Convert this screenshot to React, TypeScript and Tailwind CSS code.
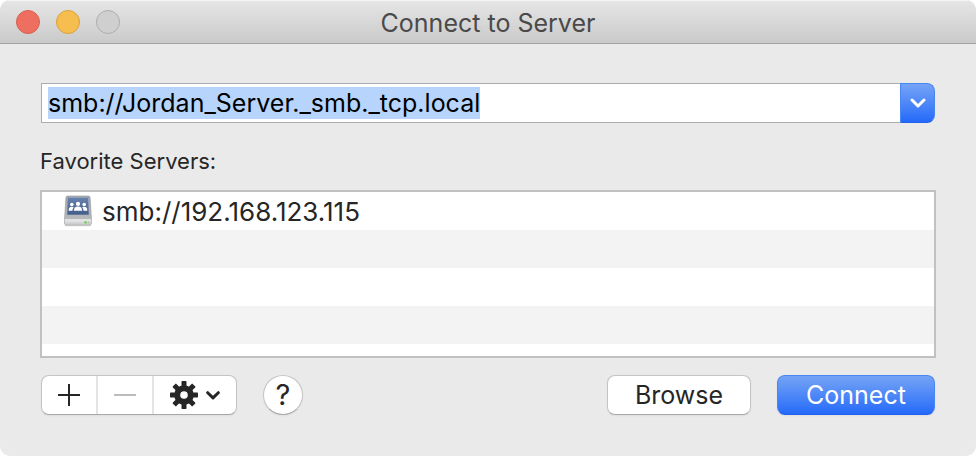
import * as React from "react";

const FAVORITES = ["smb://192.168.123.115"];
const VISIBLE_ROWS = 5;

/** Shared volume: a silver drive with a blue "people" panel. */
function ServerIcon() {
  return (
    <svg width="30" height="32" viewBox="0 0 30 32" className="shrink-0" aria-hidden>
      <defs>
        <linearGradient id="drive-top" x1="0" y1="0" x2="0" y2="1">
          <stop offset="0" stopColor="#a3a5a6" />
          <stop offset="1" stopColor="#bcbebf" />
        </linearGradient>
        <linearGradient id="drive-front" x1="0" y1="0" x2="0" y2="1">
          <stop offset="0" stopColor="#e9eaea" />
          <stop offset="1" stopColor="#c4c6c7" />
        </linearGradient>
        <linearGradient id="drive-panel" x1="0" y1="0" x2="0" y2="1">
          <stop offset="0" stopColor="#6782b0" />
          <stop offset="1" stopColor="#435d88" />
        </linearGradient>
      </defs>
      <path d="M1.500 29.500h27l-1 1.700h-25z" fill="#000" opacity="0.14" />
      <path
        d="M4.600 1h20.800c1 0 1.600.6 1.700 1.600l1.400 21.900v3.600c0 1.200-.8 2-2 2h-23c-1.200 0-2-.8-2-2v-3.600l1.400-21.900c.1-1 .7-1.600 1.700-1.600z"
        fill="url(#drive-top)"
        stroke="#96999b"
        strokeWidth="0.6"
      />
      <path
        d="M1.800 24.800h26.400v3.300c0 1.100-.8 1.700-1.800 1.700h-22.800c-1 0-1.800-.6-1.800-1.700z"
        fill="url(#drive-front)"
      />
      <path d="M1.900 24.700h26.200" stroke="#f5f6f6" strokeWidth="0.7" />
      <path d="M4.400 2.300h21.200l.5 17.700H3.900z" fill="url(#drive-panel)" stroke="#b4bac2" strokeWidth="0.6" />
      <g fill="#fff">
        <circle cx="8.800" cy="9.500" r="1.800" />
        <circle cx="21.200" cy="9.500" r="1.800" />
        <path d="M5.700 15.800c-.2-2.700.9-4.100 3.100-4.100 1 0 1.700.3 2.100.9-1 .7-1.400 1.800-1.400 3.200z" />
        <path d="M24.300 15.800c.2-2.700-.9-4.100-3.100-4.100-1 0-1.700.3-2.100.9 1 .7 1.400 1.800 1.400 3.200z" />
        <circle cx="15" cy="8.900" r="2.100" />
        <path d="M10.900 15.800c-.1-3 1.300-4.400 4.100-4.400s4.200 1.400 4.100 4.400z" />
      </g>
      <ellipse cx="22.600" cy="27.400" rx="1.600" ry="1.100" fill="#76cf55" />
      <path d="M25.700 26.500v1.800" stroke="#9ea1a2" strokeWidth="0.7" />
    </svg>
  );
}

function GearIcon() {
  return (
    <svg width="28" height="28" viewBox="0 0 28 28" aria-hidden>
      <g fill="#262626">
        {[0, 45, 90, 135].map((deg) => (
          <rect key={deg} x="11.500" y="0" width="5" height="28" rx="0.800" transform={`rotate(${deg} 14 14)`} />
        ))}
        <circle cx="14" cy="14" r="9.800" />
      </g>
      <circle cx="14" cy="14" r="3.800" fill="#fff" />
    </svg>
  );
}

function Chevron() {
  return (
    <svg
      width="16"
      height="10"
      viewBox="0 0 16 10"
      fill="none"
      stroke="currentColor"
      strokeWidth="3"
      strokeLinecap="round"
      strokeLinejoin="round"
      aria-hidden
    >
      <path d="M2 2l6 6 6-6" />
    </svg>
  );
}

function SmallChevron() {
  return (
    <svg
      width="14"
      height="10"
      viewBox="0 0 14 10"
      fill="none"
      stroke="currentColor"
      strokeWidth="3"
      strokeLinecap="round"
      strokeLinejoin="round"
      aria-hidden
    >
      <path d="M1.700 2.700l5.300 5.200 5.300-5.200" />
    </svg>
  );
}

function TitleBar() {
  return (
    <header className="relative flex h-11 items-center justify-center border-b border-[#a2a2a2] bg-linear-to-b from-[#e6e6e6] to-[#cacaca] shadow-[inset_0_1px_0_#f5f5f5]">
      <div className="absolute left-4 flex gap-4">
        <button type="button" aria-label="Close" className="size-6 rounded-full border border-[#d9604f] bg-[#ee6f5f]" />
        <button type="button" aria-label="Minimize" className="size-6 rounded-full border border-[#d9a13c] bg-[#f6be4f]" />
        <button type="button" aria-label="Zoom" disabled className="size-6 rounded-full border border-[#adadad] bg-[#cfcfcf]" />
      </div>
      <h1 className="pt-0.5 text-[25px] leading-8 text-[#4a4a4a]">Connect to Server</h1>
    </header>
  );
}

export default function App() {
  const [address, setAddress] = React.useState("smb://Jordan_Server._smb._tcp.local");
  const inputRef = React.useRef<HTMLInputElement>(null);

  React.useEffect(() => {
    inputRef.current?.focus();
    inputRef.current?.select();
  }, []);

  return (
    <div className="min-h-screen bg-white font-['Inter','Liberation_Sans',sans-serif] text-[#262626]">
      <div className="flex min-h-screen flex-col overflow-hidden rounded-[10px] bg-[#eaeaea]">
        <TitleBar />
        <main className="px-10 pt-[39px] pb-10">
          <div className="mx-px flex h-10">
            <input
              ref={inputRef}
              type="text"
              aria-label="Server address"
              value={address}
              onChange={(e) => setAddress(e.target.value)}
              className="min-w-0 flex-1 border border-r-0 border-[#acacac] bg-white px-1.5 text-[25px] leading-8 text-black caret-transparent outline-none selection:bg-[#b7d5fcfe] selection:text-black"
            />
            <button
              type="button"
              aria-label="Recent servers"
              className="flex w-[35px] items-center justify-center rounded-r-lg border border-[#4a86f2] border-b-[#2262ee] bg-linear-to-b from-[#75a3f5] to-[#2469f9] text-white"
            >
              <Chevron />
            </button>
          </div>

          <h2 id="favorites" className="mt-6 text-[22px] leading-7">
            Favorite Servers:
          </h2>
          <ul
            aria-labelledby="favorites"
            className="mt-[15px] h-[168px] overflow-hidden border-2 border-[#c1c1c1] bg-white text-[26px]"
          >
            {Array.from({ length: VISIBLE_ROWS }, (_, i) => (
              <li key={i} className="flex h-[38px] items-center gap-[9px] pl-[21px] even:bg-[#f3f3f3]">
                {FAVORITES[i] ? (
                  <>
                    <ServerIcon />
                    <span>{FAVORITES[i]}</span>
                  </>
                ) : null}
              </li>
            ))}
          </ul>

          <div className="mx-px mt-[17px] flex items-center">
            <div className="flex h-10 divide-x-2 divide-[#e4e4e4] overflow-hidden rounded-lg border border-[#c4c4c4] border-b-[#a9a9a9] bg-white shadow-xs">
              <button type="button" aria-label="Add favorite" className="flex w-14 items-center justify-center">
                <svg width="22" height="22" viewBox="0 0 22 22" stroke="#262626" strokeWidth="2" aria-hidden>
                  <path d="M11 0v22M0 11h22" />
                </svg>
              </button>
              <button type="button" aria-label="Remove favorite" disabled className="flex w-14 items-center justify-center">
                <svg width="22" height="22" viewBox="0 0 22 22" stroke="#bcbcbc" strokeWidth="2" aria-hidden>
                  <path d="M0 11h22" />
                </svg>
              </button>
              <button type="button" aria-label="Actions" className="flex w-[82px] items-center justify-center gap-2">
                <GearIcon />
                <SmallChevron />
              </button>
            </div>
            <button
              type="button"
              aria-label="Help"
              className="ml-[26px] size-10 rounded-full border border-[#c4c4c4] border-b-[#a9a9a9] bg-white text-[29px] leading-9 shadow-xs"
            >
              ?
            </button>
            <button
              type="button"
              className="ml-auto h-10 w-36 rounded-lg border border-[#c4c4c4] border-b-[#a9a9a9] bg-white text-[25px] leading-8 shadow-xs"
            >
              Browse
            </button>
            <button
              type="button"
              className="ml-[26px] h-10 w-[158px] rounded-lg border border-[#4a86f2] border-b-[#2262ee] bg-linear-to-b from-[#75a3f5] to-[#2469f9] text-[25px] leading-8 text-white shadow-xs"
            >
              Connect
            </button>
          </div>
        </main>
      </div>
    </div>
  );
}
